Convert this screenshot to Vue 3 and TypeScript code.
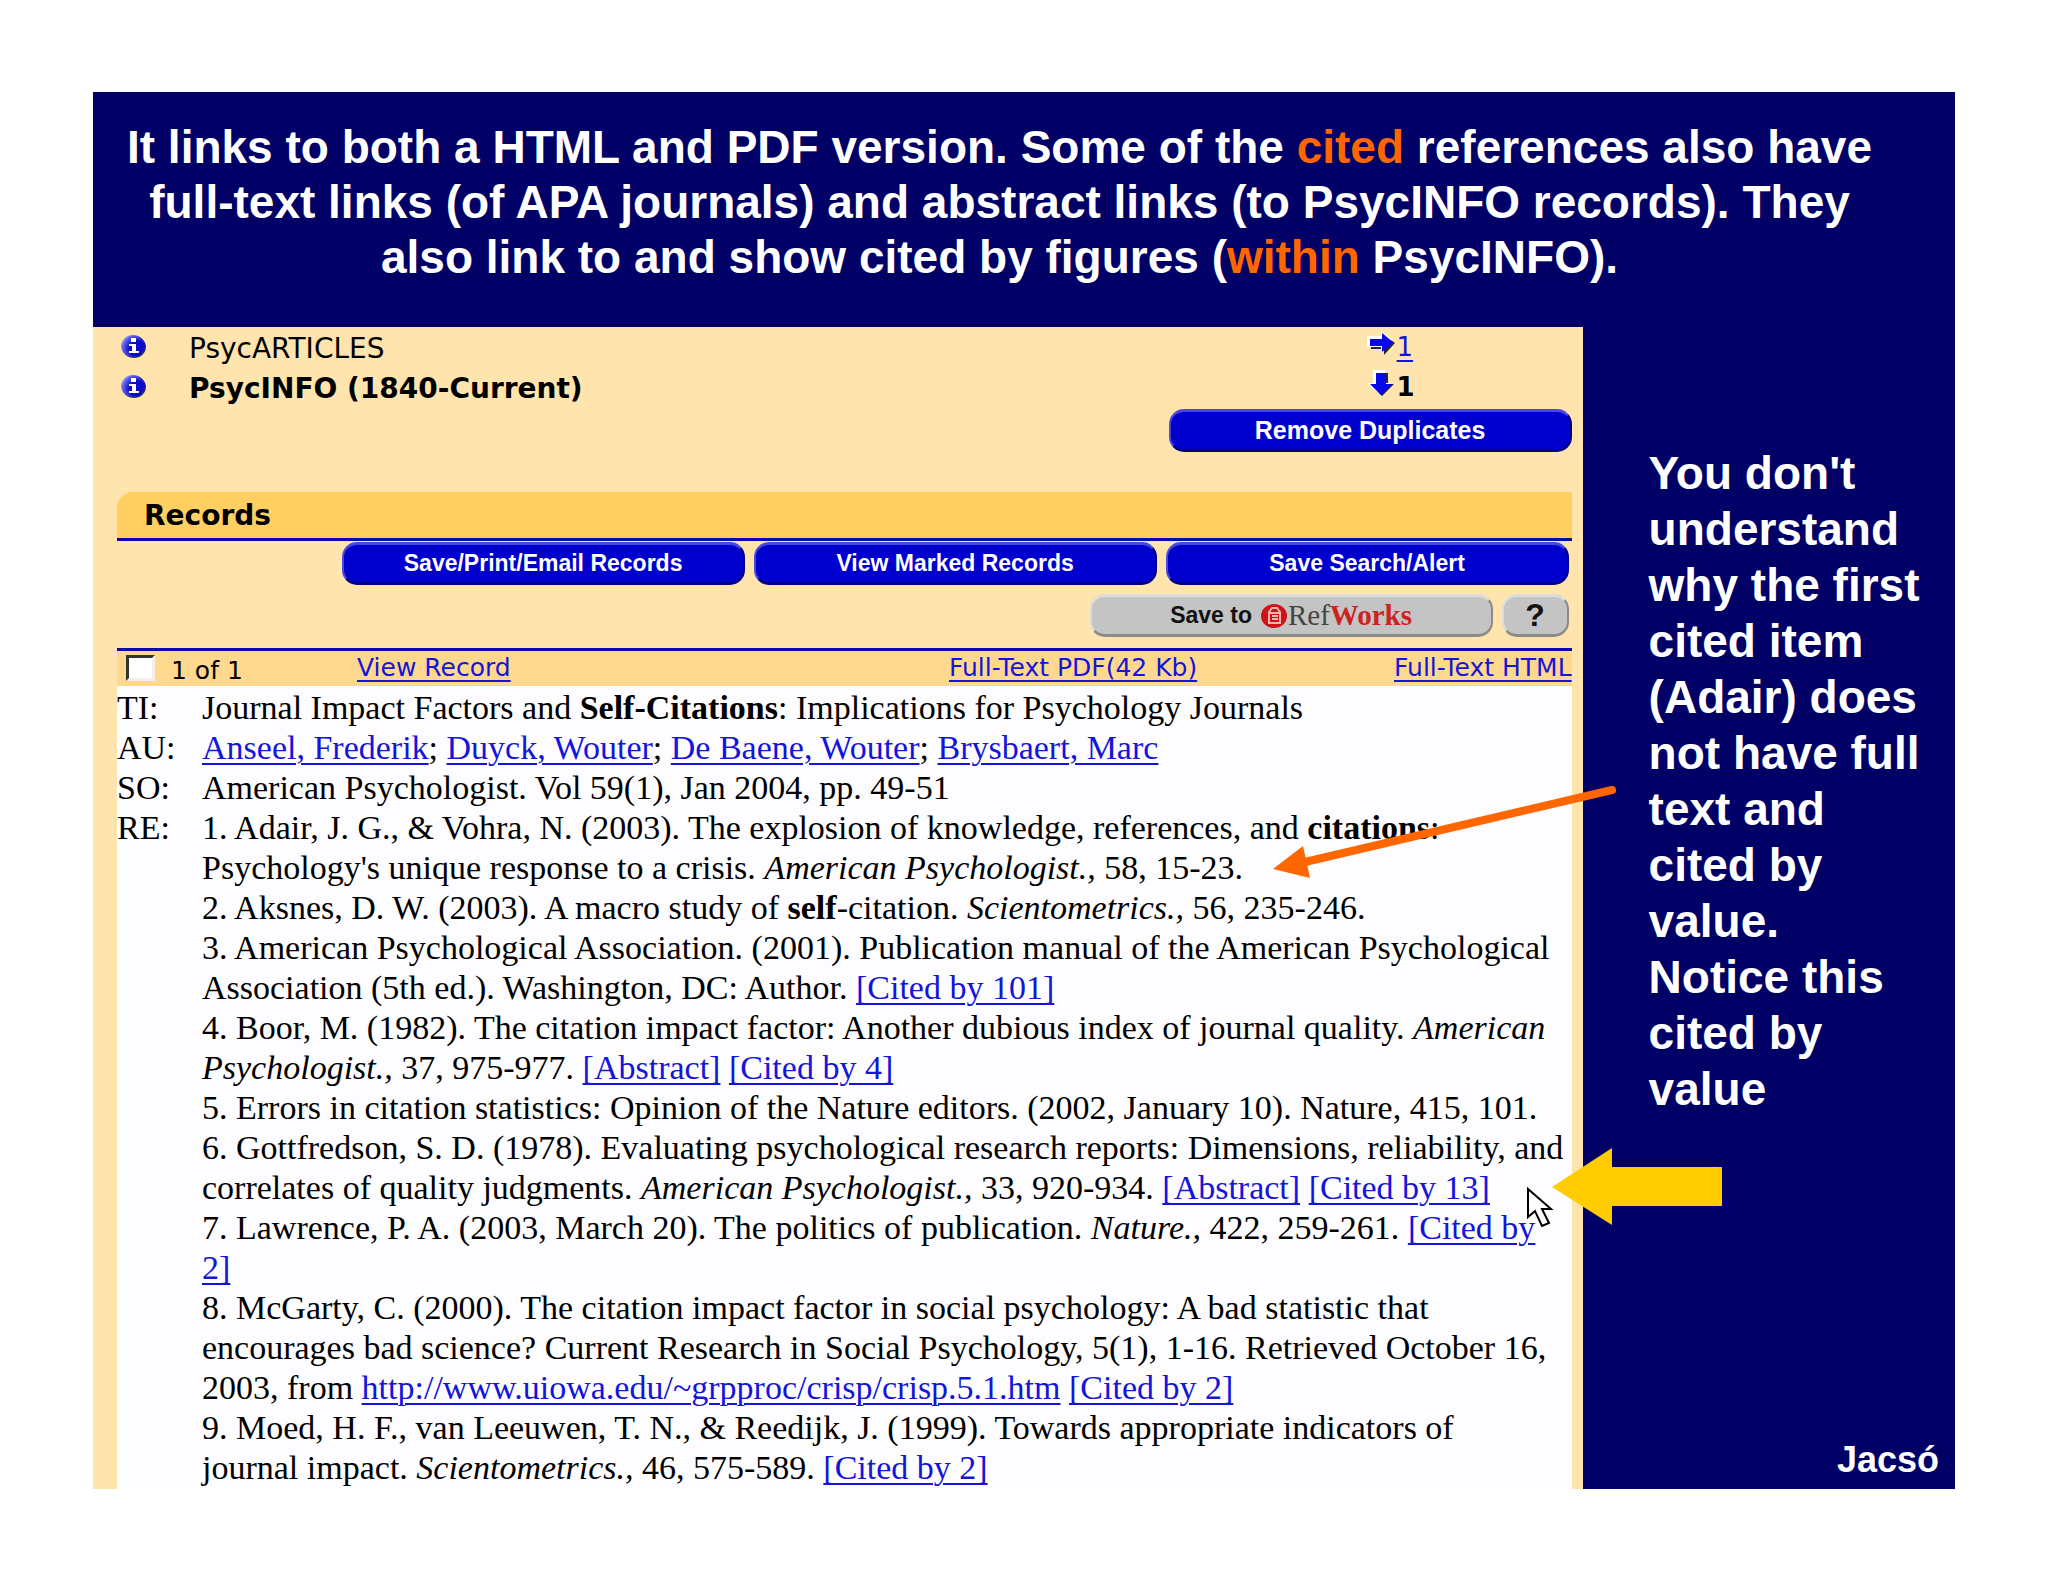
<script setup lang="ts">
interface Part {
  text: string
  kind?: 'link' | 'bold' | 'italic'
}
type Line = Part[]

const t = (text: string): Part => ({ text })
const a = (text: string): Part => ({ text, kind: 'link' })
const b = (text: string): Part => ({ text, kind: 'bold' })
const i = (text: string): Part => ({ text, kind: 'italic' })

const fields: { label: string; lines: Line[] }[] = [
  {
    label: 'TI:',
    lines: [[t('Journal Impact Factors and '), b('Self-Citations'), t(': Implications for Psychology Journals')]],
  },
  {
    label: 'AU:',
    lines: [[a('Anseel, Frederik'), t('; '), a('Duyck, Wouter'), t('; '), a('De Baene, Wouter'), t('; '), a('Brysbaert, Marc')]],
  },
  { label: 'SO:', lines: [[t('American Psychologist. Vol 59(1), Jan 2004, pp. 49-51')]] },
  {
    label: 'RE:',
    lines: [
      [t('1. Adair, J. G., & Vohra, N. (2003). The explosion of knowledge, references, and '), b('citations'), t(':')],
      [t("Psychology's unique response to a crisis. "), i('American Psychologist.,'), t(' 58, 15-23.')],
      [t('2. Aksnes, D. W. (2003). A macro study of '), b('self'), t('-citation. '), i('Scientometrics.,'), t(' 56, 235-246.')],
      [t('3. American Psychological Association. (2001). Publication manual of the American Psychological')],
      [t('Association (5th ed.). Washington, DC: Author. '), a('[Cited by 101]')],
      [t('4. Boor, M. (1982). The citation impact factor: Another dubious index of journal quality. '), i('American')],
      [i('Psychologist.,'), t(' 37, 975-977. '), a('[Abstract]'), t(' '), a('[Cited by 4]')],
      [t('5. Errors in citation statistics: Opinion of the Nature editors. (2002, January 10). Nature, 415, 101.')],
      [t('6. Gottfredson, S. D. (1978). Evaluating psychological research reports: Dimensions, reliability, and')],
      [t('correlates of quality judgments. '), i('American Psychologist.,'), t(' 33, 920-934. '), a('[Abstract]'), t(' '), a('[Cited by 13]')],
      [t('7. Lawrence, P. A. (2003, March 20). The politics of publication. '), i('Nature.,'), t(' 422, 259-261. '), a('[Cited by')],
      [a('2]')],
      [t('8. McGarty, C. (2000). The citation impact factor in social psychology: A bad statistic that')],
      [t('encourages bad science? Current Research in Social Psychology, 5(1), 1-16. Retrieved October 16,')],
      [t('2003, from '), a('http://www.uiowa.edu/~grpproc/crisp/crisp.5.1.htm'), t(' '), a('[Cited by 2]')],
      [t('9. Moed, H. F., van Leeuwen, T. N., & Reedijk, J. (1999). Towards appropriate indicators of')],
      [t('journal impact. '), i('Scientometrics.,'), t(' 46, 575-589. '), a('[Cited by 2]')],
    ],
  },
]

const note = ["You don't", 'understand', 'why the first', 'cited item', '(Adair) does', 'not have full', 'text and', 'cited by', 'value.', 'Notice this', 'cited by', 'value']

const databases = [
  { name: 'PsycARTICLES', current: false },
  { name: 'PsycINFO (1840-Current)', current: true },
]
</script>

<template>
  <main class="slide">
    <h1 class="title">
      It links to both a HTML and PDF version. Some of the <em>cited</em> references also have<br />
      full-text links (of APA journals) and abstract links (to PsycINFO records). They<br />
      also link to and show cited by figures (<em>within</em> PsycINFO).
    </h1>

    <div class="body">
      <section class="panel">
        <div class="top">
          <div v-for="d in databases" :key="d.name" class="db" :class="{ current: d.current }">
            <svg class="info" viewBox="0 0 26 24" aria-hidden="true">
              <defs>
                <radialGradient id="ball" cx="0.7" cy="0.62" r="0.75">
                  <stop offset="0.45" stop-color="#0a0ac8" />
                  <stop offset="0.8" stop-color="#5a5ae6" />
                  <stop offset="1" stop-color="#a8a8f4" />
                </radialGradient>
              </defs>
              <ellipse cx="14" cy="13" rx="12" ry="11" fill="#34345c" />
              <ellipse cx="13" cy="12" rx="12" ry="11" fill="url(#ball)" />
              <path d="M11 4h5v4h-5zM9 10h7v7h3v2H9v-2h3v-5H9z" fill="#fff" />
            </svg>
            <span class="db-name">{{ d.name }}</span>
            <span class="hits">
              <svg v-if="!d.current" class="dir" viewBox="0 0 28 26" aria-hidden="true">
                <path d="M4 10h12V4l12 9-11 12v-6H4z" fill="#22224a" />
                <path d="M0 6h14V0l11 10-11 10v-3H0z" fill="#fff" />
                <path d="M3 9h12V3l11 9-11 10v-6H3z" fill="#0808e8" />
              </svg>
              <svg v-else class="dir" viewBox="0 0 28 26" aria-hidden="true">
                <path d="M10 3h11v11h6L15 26 6 17z" fill="#22224a" />
                <path d="M6 0h12v13h5L12 23 0 13h6z" fill="#fff" />
                <path d="M9 3h10v11h6L14 25 3 14h6z" fill="#0808e8" />
              </svg>
              <a v-if="!d.current" href="#">1</a>
              <span v-else>1</span>
            </span>
          </div>
          <div class="actions"><button type="button" class="btn wide">Remove Duplicates</button></div>
        </div>

        <h2 class="records">Records</h2>
        <div class="tools">
          <div class="actions">
            <button type="button" class="btn">Save/Print/Email Records</button>
            <button type="button" class="btn">View Marked Records</button>
            <button type="button" class="btn">Save Search/Alert</button>
          </div>
          <div class="actions second">
            <button type="button" class="btn grey">
              <span>Save to</span>
              <svg class="rw" viewBox="0 0 28 26" aria-hidden="true">
                <ellipse cx="14" cy="13" rx="13" ry="12" fill="#cc1518" />
                <path d="M9 20V9l3-4h5l3 4v11z" fill="none" stroke="#f3b5b0" stroke-width="2" />
                <path d="M10 10h10M12 13h6M12 16h6" stroke="#f3b5b0" stroke-width="2" />
              </svg>
              <span class="logo">Ref<b>Works</b></span>
            </button>
            <button type="button" class="btn grey help">?</button>
          </div>
        </div>

        <div class="row">
          <label class="pick"><input type="checkbox" /><span>1 of 1</span></label>
          <a href="#">View Record</a>
          <a href="#">Full-Text PDF(42 Kb)</a>
          <a href="#" class="html">Full-Text HTML</a>
        </div>

        <table class="record">
          <tbody>
            <tr v-for="f in fields" :key="f.label">
              <th scope="row">{{ f.label }}</th>
              <td>
                <div v-for="(line, n) in f.lines" :key="n" class="line">
                  <template v-for="(p, k) in line" :key="k"><a v-if="p.kind === 'link'" href="#">{{ p.text }}</a><b v-else-if="p.kind === 'bold'">{{ p.text }}</b><i v-else-if="p.kind === 'italic'">{{ p.text }}</i><template v-else>{{ p.text }}</template></template>
                </div>
              </td>
            </tr>
          </tbody>
        </table>
      </section>

      <aside class="side">
        <p class="note"><template v-for="l in note" :key="l">{{ l }}<br /></template></p>
        <p class="author">Jacsó</p>
      </aside>
    </div>

    <svg class="marks" aria-hidden="true">
      <path d="M1519 698L1212 770" stroke="#ff6600" stroke-width="8" stroke-linecap="round" />
      <path d="M1180 777L1210 754L1217 786z" fill="#ff6600" />
      <path d="M1459 1095L1519 1056V1075H1629V1114H1519V1133z" fill="#ffcc00" />
      <path d="M1435 1097V1125L1442 1119L1449 1134L1456 1131L1449 1117H1458z" fill="#fff" stroke="#000" stroke-width="2" />
    </svg>
  </main>
</template>

<style>
body {
  margin: 0;
  background: #fff;
}
</style>

<style scoped>
.slide {
  position: relative;
  margin: 92px 93px;
  background: #000066;
  font-family: 'Liberation Sans', Arial, sans-serif;
}
.title {
  box-sizing: border-box;
  height: 235px;
  margin: 0;
  padding: 28px 49px 0 0;
  color: #fff;
  font-size: 46px;
  line-height: 55px;
  text-align: center;
  white-space: nowrap;
}
.title em {
  color: #ff6600;
  font-style: normal;
}
.body {
  display: grid;
  grid-template-columns: 4fr 1fr;
}
.panel {
  min-width: 0;
  padding: 0 11px 0 24px;
  background: #ffe4ae;
  color: #000;
  font-family: 'DejaVu Sans', Verdana, sans-serif;
}
a {
  color: #1414dc;
  text-decoration-thickness: 2px;
  text-underline-offset: 4px;
}
.top {
  height: 165px;
}
.db {
  display: flex;
  height: 40px;
  font-size: 28px;
  line-height: 44px;
}
.info {
  width: 26px;
  height: 24px;
  margin: 7px 43px 0 3px;
}
.current {
  font-weight: bold;
}
.db-name {
  flex: 1;
}
.hits {
  display: flex;
  gap: 2px;
  width: 205px;
  font-size: 26px;
  font-weight: normal;
  line-height: 40px;
}
.dir {
  width: 28px;
  height: 26px;
  margin-top: 3px;
}
.current .hits {
  font-weight: bold;
}
.actions {
  display: flex;
  justify-content: flex-end;
  gap: 9px;
}
.btn {
  display: flex;
  align-items: center;
  justify-content: center;
  box-sizing: border-box;
  width: 403px;
  height: 43px;
  padding: 0;
  border: solid;
  border-width: 3px 2px;
  border-color: #4848e0 #000080 #000080 #4848e0;
  border-radius: 15px;
  background: #0000ce;
  color: #fff;
  font: bold 23px 'Liberation Sans', Arial, sans-serif;
}
.wide {
  font-size: 25px;
}
.top .actions {
  padding-top: 2px;
}
.records {
  height: 46px;
  margin: 0;
  padding-left: 27px;
  border-bottom: 3px solid #0a0aa8;
  border-top-left-radius: 16px;
  background: #ffcf62;
  font-size: 28px;
  line-height: 48px;
}
.tools {
  box-sizing: border-box;
  height: 107px;
  padding: 1px 3px 0 0;
}
.second {
  padding-top: 9px;
}
.grey {
  border-color: #dcdcd8 #8a8a88 #8a8a88 #dcdcd8;
  background: #c4c4c4;
  color: #111;
}
.help {
  width: 67px;
  font-size: 32px;
}
.rw {
  width: 28px;
  height: 26px;
  margin-left: 8px;
}
.logo {
  color: #444;
  font: 29px 'Liberation Serif', 'Times New Roman', serif;
}
.logo b {
  color: #cc2222;
}
.row {
  display: grid;
  grid-template-columns: 240px 592px 1fr auto;
  height: 35px;
  border-top: 3px solid #0a0aa8;
  background: #fed88e;
  font-size: 25px;
  line-height: 34px;
  white-space: nowrap;
}
.html {
  text-align: right;
}
.pick {
  display: flex;
  gap: 16px;
  line-height: 40px;
}
.pick input {
  appearance: none;
  box-sizing: border-box;
  width: 29px;
  height: 26px;
  margin: 4px 0 0 9px;
  border: solid;
  border-width: 3px;
  border-color: #333 #f4f0e8 #f4f0e8 #333;
  background: #fff;
}
.record {
  width: 100%;
  height: 803px;
  padding-top: 2px;
  border-spacing: 0;
  background: #fdfcfe;
  font: 34px/40px 'Liberation Serif', 'Times New Roman', serif;
}
.record th {
  width: 85px;
  padding: 0;
  font-weight: normal;
  text-align: left;
  vertical-align: top;
}
.record td {
  padding: 0;
  vertical-align: top;
}
.line {
  white-space: pre;
}
.side {
  display: flex;
  flex-direction: column;
  justify-content: space-between;
  color: #fff;
  font-weight: bold;
}
.note {
  margin: 118px 0 0 66px;
  font-size: 46px;
  line-height: 56px;
  white-space: nowrap;
}
.author {
  margin: 0 16px 9px;
  font-size: 36px;
  line-height: 40px;
  text-align: right;
}
.marks {
  position: absolute;
  top: 0;
  left: 0;
  width: 100%;
  height: 100%;
  pointer-events: none;
}
</style>
